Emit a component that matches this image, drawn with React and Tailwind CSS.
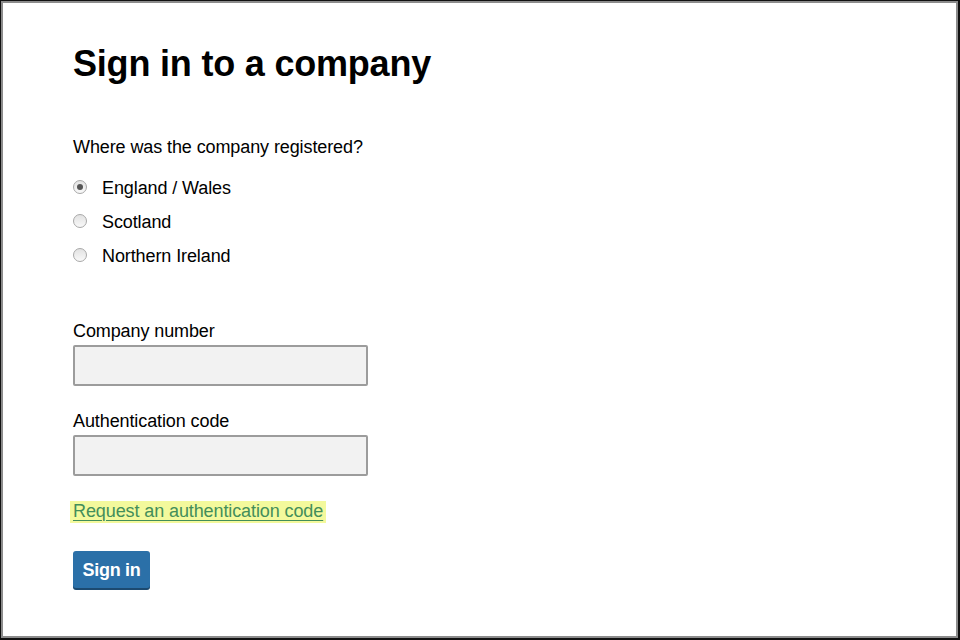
import React from "react";

function Radio({ checked, label }) {
  return (
    <label className="flex h-[34px] items-center">
      <span className="relative -mt-[3px] flex h-[14px] w-[14px] items-center justify-center rounded-full border border-[#a8a8a8] bg-gradient-to-b from-[#e2e2e2] to-[#f9f9f9]">
        {checked && <span className="h-[6px] w-[6px] rounded-full bg-[#555]" />}
      </span>
      <span className="ml-[15px] text-[18px] leading-[24px] tracking-[-0.1px]">{label}</span>
    </label>
  );
}

export default function App() {
  return (
    <div
      className="flex h-[640px] w-[960px] border-t border-l border-r-2 border-b-2 border-[#111] text-black"
      style={{ fontFamily: '"Liberation Sans", Arial, sans-serif' }}
    >
      <div className="flex-1 border-2 border-[#8c8c8c] bg-white pl-[70px] pt-[41px]">
        <h1 className="text-[36px] font-bold leading-[40px] tracking-[-0.2px]">Sign in to a company</h1>

        <p className="mt-[51px] text-[18px] leading-[24px] tracking-[-0.1px]">Where was the company registered?</p>

        <div className="mt-[12px] flex flex-col">
          <Radio checked label="England / Wales" />
          <Radio label="Scotland" />
          <Radio label="Northern Ireland" />
        </div>

        <div className="mt-[46px] flex flex-col">
          <label className="text-[18px] leading-[24px] tracking-[-0.1px]">Company number</label>
          <div className="mt-[2px] h-[41px] w-[295px] rounded-[2px] border-2 border-[#9c9c9c] bg-[#f2f2f2]" />
        </div>

        <div className="mt-[23px] flex flex-col">
          <label className="text-[18px] leading-[24px] tracking-[-0.1px]">Authentication code</label>
          <div className="mt-[2px] h-[41px] w-[295px] rounded-[2px] border-2 border-[#9c9c9c] bg-[#f2f2f2]" />
        </div>

        <div className="mt-[23px] -ml-[3px] text-[18px] leading-[24px] tracking-[-0.1px]">
          <span className="bg-[#f3f99c] px-[3px] pb-[2px] text-[#438e5a] underline decoration-1 underline-offset-[3px]">
            Request an authentication code
          </span>
        </div>

        <button className="mt-[28px] h-[37px] w-[77px] rounded-[3px] bg-[#2b70a8] text-[18px] font-bold leading-[24px] tracking-[-0.3px] text-white shadow-[0_2px_0_#1c4a70]">
          Sign in
        </button>
      </div>
    </div>
  );
}
